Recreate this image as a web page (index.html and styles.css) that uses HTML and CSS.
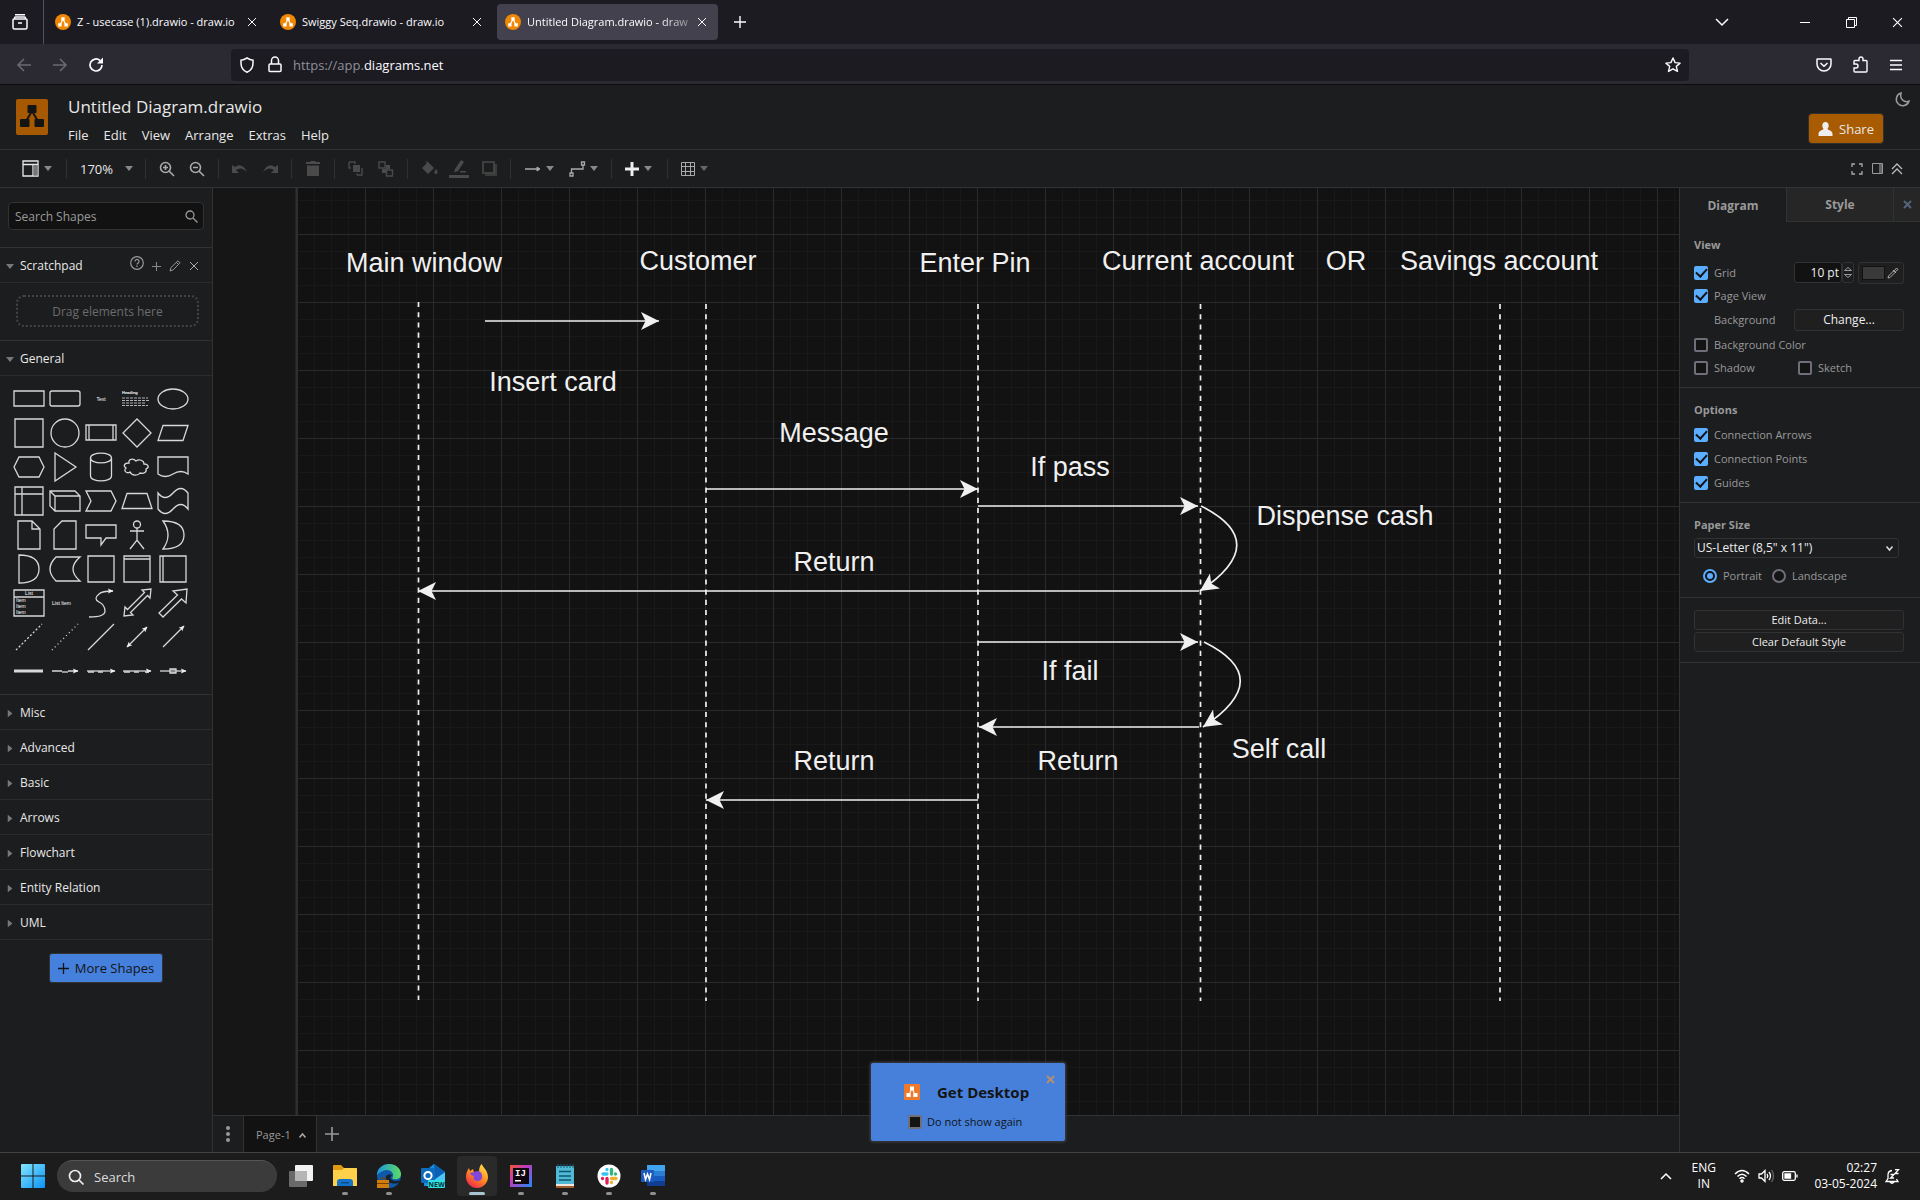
FILE: index.html
```html
<!DOCTYPE html>
<html lang="en">
<head>
<meta charset="utf-8">
<title>Untitled Diagram.drawio - draw.io</title>
<link rel="stylesheet" href="styles.css">
</head>
<body>
<svg class="defs" width="0" height="0" aria-hidden="true">
  <defs>
    <symbol id="drawio" viewBox="0 0 16 16"><circle cx="8" cy="8" r="8" fill="#f08705"/><path d="M8 5 5 11M8 5l3 6" stroke="#fff" stroke-width="1.2"/><path d="M6.3 3.2h3.4v3.2H6.3zM3.2 9.3h3.4v3.2H3.2zM9.4 9.3h3.4v3.2H9.4z" fill="#fff"/></symbol>
    <symbol id="x" viewBox="0 0 10 10"><path d="m1 1 8 8M9 1 1 9" stroke="currentColor" fill="none"/></symbol>
    <symbol id="plus" viewBox="0 0 12 12"><path d="M6 0v12M0 6h12" stroke="currentColor" stroke-width="1.4" fill="none"/></symbol>
    <symbol id="caret" viewBox="0 0 8 5"><path d="M0 0h8L4 5z" fill="currentColor"/></symbol>
    <marker id="head" markerUnits="userSpaceOnUse" markerWidth="20" markerHeight="20" refX="18" refY="9.5" orient="auto"><path d="M18 9.5 0 .5l4.5 9L0 18.500z" fill="#f0f0f0"/></marker>
    <marker id="tip" markerUnits="userSpaceOnUse" markerWidth="6" markerHeight="6" refX="5" refY="3" orient="auto-start-reverse"><path d="M5.500 3 0 .5l1 2.500-1 2.500z" fill="#f0f0f0"/></marker>
  </defs>
</svg>

<header class="tabbar">
  <button class="plain recent" aria-label="Recent browsing"><svg width="16" height="16" viewBox="0 0 16 16" fill="none" stroke="#fbfbfe" stroke-width="1.500"><path d="M3 .8h10M2 5q-1 0-1 1v7.500q0 1.500 1.500 1.500h11q1.500 0 1.500-1.500V6q0-1-1-1zM2.500 5V4q0-1 1-1h9q1 0 1 1v1M6 9h4"/></svg></button>
  <nav class="tabs">
    <a class="tab" href="#"><svg class="fav"><use href="#drawio"/></svg><span>Z - usecase (1).drawio - draw.io</span><svg class="close"><use href="#x"/></svg></a>
    <a class="tab" href="#"><svg class="fav"><use href="#drawio"/></svg><span>Swiggy Seq.drawio - draw.io</span><svg class="close"><use href="#x"/></svg></a>
    <a class="tab active" href="#"><svg class="fav"><use href="#drawio"/></svg><span>Untitled Diagram.drawio - draw</span><svg class="close"><use href="#x"/></svg></a>
  </nav>
  <button class="plain newtab" aria-label="New tab"><svg width="12" height="12"><use href="#plus"/></svg></button>
  <div class="winctl">
    <button class="plain alltabs" aria-label="List all tabs"><svg width="14" height="8" fill="none" stroke="#fbfbfe" stroke-width="1.500"><path d="m1 1 6 6 6-6"/></svg></button>
    <button class="plain" aria-label="Minimise"><svg width="10" height="10" stroke="#fff"><path d="M0 5.500h10"/></svg></button>
    <button class="plain" aria-label="Restore"><svg width="11" height="11" fill="none" stroke="#fff"><path d="M.5 2.500h8v8h-8zM2.500 2.500v-2h8v8h-2"/></svg></button>
    <button class="plain" aria-label="Close"><svg width="11" height="11" viewBox="0 0 10 10" color="#fff"><use href="#x"/></svg></button>
  </div>
</header>

<div class="navbar">
  <div class="navbtns">
    <button class="plain dim" aria-label="Back"><svg width="16" height="14" fill="none" stroke="currentColor" stroke-width="1.500"><path d="M15 7H2M8 1 2 7l6 6"/></svg></button>
    <button class="plain dim" aria-label="Forward"><svg width="16" height="14" fill="none" stroke="currentColor" stroke-width="1.500"><path d="M1 7h13M8 1l6 6-6 6"/></svg></button>
    <button class="plain" aria-label="Reload"><svg width="16" height="16" fill="none" stroke="#fbfbfe" stroke-width="1.700"><path d="M14 8a6 6 0 1 1-2-4.500"/><path d="M15 .5v6H9z" fill="#fbfbfe" stroke="none"/></svg></button>
  </div>
  <div class="urlbox">
    <svg width="16" height="16" fill="none" stroke="#fbfbfe" stroke-width="1.500"><path d="M8 1c2.500 1.600 4 2 6 2.200v3C14 11 12 13.500 8 15.200 4 13.500 2 11 2 6.200v-3C4 3 5.500 2.600 8 1z"/></svg>
    <svg width="14" height="17" fill="none" stroke="#fbfbfe" stroke-width="1.500"><path d="M2 8h10q1 0 1 1v5.500q0 1-1 1H2q-1 0-1-1V9q0-1 1-1zM3.500 8V4.500a3.500 3.500 0 0 1 7 0V8"/></svg>
    <span class="url">https://app.<b>diagrams.net</b></span>
    <svg width="16" height="16" fill="none" stroke="#fbfbfe" stroke-width="1.400" stroke-linejoin="round"><path d="m8 1 2.100 4.600 5 .5-3.800 3.300 1.200 5L8 11.800l-4.500 2.600 1.200-5L.9 6.100l5-.5z"/></svg>
  </div>
  <div class="navright">
    <button class="plain" aria-label="Pocket"><svg width="16" height="14" fill="none" stroke="#fbfbfe" stroke-width="1.500"><path d="M1.500 1h13q.5 0 .5.500V6a7 7 0 0 1-14 0V1.500Q1 1 1.500 1zM4.500 5 8 8.200 11.500 5"/></svg></button>
    <button class="plain" aria-label="Extensions"><svg width="15" height="17" fill="none" stroke="#fbfbfe" stroke-width="1.400"><path d="M2 16h11q1 0 1-1V5.500q0-1-1-1h-3V3a2 2 0 0 0-4 0v1.500H2q-1 0-1 1V8h2a2 2 0 0 1 0 4H1v3q0 1 1 1z"/></svg></button>
    <button class="plain" aria-label="Menu"><svg width="12" height="12" stroke="#fbfbfe" stroke-width="1.300"><path d="M0 1.500h12M0 6h12M0 10.500h12"/></svg></button>
  </div>
</div>

<div class="apphead">
  <svg class="logo" width="32" height="36" viewBox="0 0 32 36"><rect width="32" height="36" rx="2" fill="#a65900"/><path d="M16 12 9 24M16 12l7 12" stroke="#141414" stroke-width="2"/><rect x="11.500" y="6" width="9" height="8" rx="1" fill="#141414"/><rect x="4" y="20" width="9.500" height="8" rx="1" fill="#141414"/><rect x="18.500" y="20" width="9.500" height="8" rx="1" fill="#141414"/></svg>
  <div class="titles">
    <h1>Untitled Diagram.drawio</h1>
    <nav class="menu"><a href="#">File</a><a href="#">Edit</a><a href="#">View</a><a href="#">Arrange</a><a href="#">Extras</a><a href="#">Help</a></nav>
  </div>
  <button class="share"><svg width="15" height="14" fill="#eee"><path d="M7.500 0c2 0 3.200 1.400 3.200 3.400 0 1.500-.6 2.400-1.200 3.400 0 1.500 5 1.700 5 5V14H.5v-2.200c0-3.300 5-3.500 5-5-.6-1-1.200-1.900-1.200-3.400C4.300 1.400 5.500 0 7.500 0z"/></svg>Share</button>
  <button class="plain moon" aria-label="Appearance"><svg width="15" height="15" fill="none" stroke="#9a9a9a" stroke-width="1.500"><path d="M6 1a6.500 6.500 0 1 0 8 8.300C9 11 4.500 7 6 1z"/></svg></button>
</div>

<div class="toolbar">
  <div class="group first"><button class="plain drop on" aria-label="View"><svg width="17" height="17" fill="none" stroke="currentColor" stroke-width="1.300"><path d="M1 1h15v15H1zM1 4.500h15M11 4.500V16"/><path d="M11.500 5h4v10.500h-4z" fill="#777" stroke="none"/></svg><svg class="caret"><use href="#caret"/></svg></button></div>
  <div class="group zoom"><button class="plain drop on"><span>170%</span><svg class="caret"><use href="#caret"/></svg></button></div>
  <div class="group"><button class="plain icon lit" aria-label="Zoom in"><svg width="16" height="16" fill="none" stroke="currentColor" stroke-width="1.600"><circle cx="6.500" cy="6.500" r="5"/><path d="m10 10 5 5M4 6.500h5M6.500 4v5"/></svg></button><button class="plain icon lit" aria-label="Zoom out"><svg width="16" height="16" fill="none" stroke="currentColor" stroke-width="1.600"><circle cx="6.500" cy="6.500" r="5"/><path d="m10 10 5 5M4 6.500h5"/></svg></button></div>
  <div class="group"><button class="plain icon" aria-label="Undo"><svg width="16" height="10"><path d="M0 1v8h7L4 6q5-4 11 2-5-10-12-5z" fill="currentColor"/></svg></button><button class="plain icon" aria-label="Redo"><svg width="16" height="10"><path d="M16 1v8H9l3-3Q7 2 1 8 6-2 13 3z" fill="currentColor"/></svg></button></div>
  <div class="group"><button class="plain icon" aria-label="Delete"><svg width="14" height="16" fill="currentColor"><path d="M0 1h4l1-1h4l1 1h4v2H0zM1 4.500h12V15H1z"/></svg></button></div>
  <div class="group"><button class="plain icon" aria-label="To front"><svg width="16" height="16" fill="currentColor"><path d="M5 4h7v7H5z"/><path d="M1 1h6v2M1 1v6h2M9 14h5V7M9 12.500V14" fill="none" stroke="currentColor" stroke-width="1.400"/></svg></button><button class="plain icon" aria-label="To back"><svg width="16" height="16" fill="none" stroke="currentColor" stroke-width="1.400"><path d="M1 1h6v6H1zM8.500 9h6v6h-6z"/><path d="M8 4h4v4H8zM4 8h4v4H4z" fill="currentColor" stroke="none"/></svg></button></div>
  <div class="group"><button class="plain icon" aria-label="Fill colour"><svg width="17" height="15" fill="currentColor"><path d="m7 1 6 6-6 6-6-6 5-5-2-2zM15 8c3 4 1 5 0 5s-3-1 0-5z"/></svg></button><button class="plain icon" aria-label="Line colour"><svg width="20" height="18" fill="currentColor"><path d="m12 0 3 2-6 9-4 1.500L6 9zM11 11h6v1.500h-6zM0 15h20v3H0z"/></svg></button><button class="plain icon" aria-label="Shadow"><svg width="15" height="15"><path d="M3 3h12v12H3z" fill="#3a3a3a"/><path d="M1 1h11v11H1z" fill="#1c1d1f" stroke="currentColor" stroke-width="1.600"/></svg></button></div>
  <div class="group"><button class="plain drop lit" aria-label="Connection"><svg width="16" height="8" stroke="currentColor" fill="currentColor"><path d="M0 4h12" stroke-width="1.500"/><path d="m12 2 3 2-3 2z"/></svg><svg class="caret"><use href="#caret"/></svg></button><button class="plain drop lit" aria-label="Waypoints"><svg width="16" height="16" fill="none" stroke="currentColor" stroke-width="1.300"><path d="M2.500 12V8H14V4M1 12h3v3H1zM12.500 1h3v3h-3z"/></svg><svg class="caret"><use href="#caret"/></svg></button></div>
  <div class="group single"><button class="plain drop on" aria-label="Insert"><svg width="14" height="14" stroke="#eee" stroke-width="3"><path d="M7 0v14M0 7h14"/></svg><svg class="caret"><use href="#caret"/></svg></button></div>
  <div class="group single"><button class="plain drop lit" aria-label="Table"><svg width="14" height="14" fill="none" stroke="currentColor"><path d="M.5.5h13v13H.5zM.5 4.500h13M.5 9.500h13M4.500.5v13M9.500.5v13"/></svg><svg class="caret dimcaret"><use href="#caret"/></svg></button></div>
  <div class="toolright">
    <button class="plain" aria-label="Fullscreen"><svg width="12" height="12" fill="none" stroke="#aaa" stroke-width="1.300"><path d="M1 4V1h3M8 1h3v3M11 8v3H8M4 11H1V8"/></svg></button>
    <button class="plain" aria-label="Format panel"><svg width="11" height="11" fill="none" stroke="#999"><path d="M.5.500h10v10H.5z"/><path d="M7 1h3v9H7z" fill="#666" stroke="none"/></svg></button>
    <button class="plain" aria-label="Collapse"><svg width="10" height="12" fill="none" stroke="#bbb" stroke-width="1.300"><path d="m0 6 5-5 5 5M0 11l5-5 5 5"/></svg></button>
  </div>
</div>

<main class="work">
  <aside class="shapes">
    <div class="searchwrap"><label class="search"><input type="text" placeholder="Search Shapes" aria-label="Search Shapes"><svg width="13" height="13" fill="none" stroke="#999" stroke-width="1.300"><circle cx="5" cy="5" r="4"/><path d="m8 8 4.500 4.500"/></svg></label></div>
    <div class="cat open"><svg class="tri"><use href="#caret"/></svg>Scratchpad
      <span class="tools">
        <svg class="help" width="14" height="14" fill="none" stroke="#999" stroke-width="1.200"><circle cx="7" cy="7" r="6.300"/><path d="M5 5.500a2 2 0 1 1 3 1.700q-1 .6-1 1.300M7 9.500V11"/></svg>
        <svg width="9" height="9" color="#888"><use href="#plus"/></svg>
        <svg width="12" height="12" fill="none" stroke="#999"><path d="m1 11 1-3.500L9 .8l2 2-6.700 7zM7.500 2.500l2 2"/></svg>
        <svg width="10" height="10" color="#aaa"><use href="#x"/></svg>
      </span>
    </div>
    <div class="scratch"><div class="dropzone">Drag elements here</div></div>
    <div class="cat open"><svg class="tri"><use href="#caret"/></svg>General</div>
    <div class="palette">
      <svg viewBox="-18 -17 36 34"><path d="M-15-8h30V7h-30z"/></svg>
      <svg viewBox="-18 -17 36 34"><rect x="-15" y="-8" width="30" height="15" rx="2"/></svg>
      <svg viewBox="-18 -17 36 34"><text x="0" y="2" text-anchor="middle">Text</text></svg>
      <svg viewBox="-18 -17 36 34"><text class="bold" x="-15" y="-5">Heading</text><path class="fine" d="M-15-1h26M-15 1.500h27M-15 4h23M-15 6.500h26"/></svg>
      <svg viewBox="-18 -17 36 34"><ellipse rx="15" ry="10"/></svg>

      <svg viewBox="-18 -17 36 34"><path d="M-14-14h28v28h-28z"/></svg>
      <svg viewBox="-18 -17 36 34"><circle r="14"/></svg>
      <svg viewBox="-18 -17 36 34"><path d="M-15-8h30V7h-30zM-12-8V7M12-8V7"/></svg>
      <svg viewBox="-18 -17 36 34"><path d="M0-14 14 0 0 14-14 0z"/></svg>
      <svg viewBox="-18 -17 36 34"><path d="M-10-7.500h25l-5 15h-25z"/></svg>

      <svg viewBox="-18 -17 36 34"><path d="M-15 0l5-10h20L15 0l-5 10h-20z"/></svg>
      <svg viewBox="-18 -17 36 34"><path d="M-10-14 11 0-10 14z"/></svg>
      <svg viewBox="-18 -17 36 34"><path d="M-10.500-9v18c0 6.500 21 6.500 21 0V-9c0-6.500-21-6.500-21 0 0 6.500 21 6.500 21 0"/></svg>
      <svg viewBox="-18 -17 36 34"><path d="M-8-4c-5 0-6 3-3 5-3 3 1 6 4 4 2 4 8 4 10 1 4 1 7-1 6-4 4-2 2-5-2-5 0-4-5-5-8-3-3-3-8-2-7 2z"/></svg>
      <svg viewBox="-18 -17 36 34"><path d="M-15-10h30V7q-7-5-15 0t-15 0z"/></svg>

      <svg viewBox="-18 -17 36 34"><path d="M-14-14h28v28h-28zM-14-7h28M-7-14v28"/></svg>
      <svg viewBox="-18 -17 36 34"><path d="M-15-10h25l5 5V10h-25l-5-5zM-15-10l5 5h25M-10-5v15"/></svg>
      <svg viewBox="-18 -17 36 34"><path d="M-15-10h25L15 0l-5 10h-25l5-10z"/></svg>
      <svg viewBox="-18 -17 36 34"><path d="M-10-7.500h20l5 15h-30z"/></svg>
      <svg viewBox="-18 -17 36 34"><path d="M-15-8q7 9 15 0t15 0V8Q8-1 0 8t-15 0z"/></svg>

      <svg viewBox="-18 -17 36 34"><path d="M-11-14H3l8 8v20h-22zM3-14v8h8"/></svg>
      <svg viewBox="-18 -17 36 34"><path d="M-3-14h14v28h-22V-6z"/></svg>
      <svg viewBox="-18 -17 36 34"><path d="M-15-10h30V3H5l-5 7V3h-15z"/></svg>
      <svg viewBox="-18 -17 36 34"><circle cy="-10.500" r="3.500"/><path d="M0-7V5M-7-4H7M-7 14l7-9 7 9"/></svg>
      <svg viewBox="-18 -17 36 34"><path d="M-10-14q21 0 21 14t-21 14Q0 0-10-14z"/></svg>

      <svg viewBox="-18 -17 36 34"><path d="M-10-14q20 0 20 14t-20 14z"/></svg>
      <svg viewBox="-18 -17 36 34"><path d="M-9-12h24q-14 12 0 24H-9q-12-12 0-24z"/></svg>
      <svg viewBox="-18 -17 36 34"><path d="M-13-13h26v26h-26z"/></svg>
      <svg viewBox="-18 -17 36 34"><path d="M-13-13h26v26h-26zM-13-10h26"/></svg>
      <svg viewBox="-18 -17 36 34"><path d="M-13-13h26v26h-26zM-10-13v26"/></svg>

      <svg viewBox="-18 -17 36 34"><path d="M-15-13h30v26h-30zM-15-6h30"/><text x="0" y="-8" text-anchor="middle">List</text><text x="-13" y="-1">Item</text><text x="-13" y="5">Item</text><text x="-13" y="11">Item</text></svg>
      <svg viewBox="-18 -17 36 34"><text x="-13" y="2">List Item</text></svg>
      <svg viewBox="-18 -17 36 34"><path d="M-12 14Q4 14 4 8T-2-1t0-8q3-3 14-3" marker-end="url(#tip)"/></svg>
      <svg viewBox="-18 -17 36 34"><path d="M14-14 13-5l-2.500-2.500-17 17L-4 12l-9 1 1-9 2.500 2.500 17-17L5-13z"/></svg>
      <svg viewBox="-18 -17 36 34"><path d="M14-14 13 0 8.500-4-10 14l-4-4L4.500-8 0-12z"/></svg>

      <svg viewBox="-18 -17 36 34"><path d="m-13 13 26-26" stroke-dasharray="2 2"/></svg>
      <svg viewBox="-18 -17 36 34"><path d="m-13 13 26-26" stroke-dasharray="1 3"/></svg>
      <svg viewBox="-18 -17 36 34"><path d="m-13 13 26-26"/></svg>
      <svg viewBox="-18 -17 36 34"><path d="M-10 10 10-10" marker-start="url(#tip)" marker-end="url(#tip)"/></svg>
      <svg viewBox="-18 -17 36 34"><path d="M-10 10 11-11" marker-end="url(#tip)"/></svg>

      <svg viewBox="-18 -17 36 34"><path class="thick" d="M-15 0h29"/></svg>
      <svg viewBox="-18 -17 36 34"><path d="M-13 0H-3M3 0h10" marker-end="url(#tip)"/><path d="M-3 1h6"/></svg>
      <svg viewBox="-18 -17 36 34"><path d="M-14 0h28" marker-end="url(#tip)"/><path d="M-13 1h6M-3 1h5" /></svg>
      <svg viewBox="-18 -17 36 34"><path d="M-14 0h28" marker-end="url(#tip)"/><path d="M-13 1h6M-3 1h5M8 1h4"/></svg>
      <svg viewBox="-18 -17 36 34"><path d="M-13 0h26" marker-end="url(#tip)"/><path d="M-3-2h6v4h-6z" fill="#888"/></svg>
    </div>
    <div class="cat"><svg class="tri side"><use href="#caret"/></svg>Misc</div>
    <div class="cat"><svg class="tri side"><use href="#caret"/></svg>Advanced</div>
    <div class="cat"><svg class="tri side"><use href="#caret"/></svg>Basic</div>
    <div class="cat"><svg class="tri side"><use href="#caret"/></svg>Arrows</div>
    <div class="cat"><svg class="tri side"><use href="#caret"/></svg>Flowchart</div>
    <div class="cat"><svg class="tri side"><use href="#caret"/></svg>Entity Relation</div>
    <div class="cat"><svg class="tri side"><use href="#caret"/></svg>UML</div>
    <button class="more"><svg width="11" height="11"><use href="#plus"/></svg>More Shapes</button>
  </aside>

  <section class="center">
    <div class="canvas">
      <svg class="diagram" width="100%" height="100%">
        <defs>
          <pattern id="grid" x="84" y="46" width="68" height="68" patternUnits="userSpaceOnUse">
            <path d="M17.500 0v68M34.500 0v68M51.500 0v68M0 17.500h68M0 34.500h68M0 51.500h68" stroke="#191919"/>
            <path d="M.5 0v68M0 .5h68" stroke="#2a2a2a"/>
          </pattern>
        </defs>
        <rect x="83" width="100%" height="100%" fill="#121212"/>
        <rect x="84" width="100%" height="100%" fill="url(#grid)"/>
        <path d="M83.500 0v2000" stroke="#303030" stroke-width="2"/>
        <g transform="translate(-213 -188)">
          <g class="life"><path d="M418.500 302v698"/><path d="M706 304v697"/><path d="M978 304v697"/><path d="M1200.500 304v697"/><path d="M1500 304v697"/></g>
          <g class="msg">
            <path d="M485 321h174"/><path d="M706 489h272"/><path d="M978 506h220"/><path d="M1199 591H418"/>
            <path d="M978 642h220"/><path d="M1199 727H979"/><path d="M978 800H706"/>
            <path d="M1201 506Q1273 542 1200 591"/><path d="M1204 642Q1277 678 1203 727"/>
          </g>
          <g class="labels">
            <text x="424" y="272">Main window</text><text x="698" y="270">Customer</text><text x="975" y="272">Enter Pin</text>
            <text x="1198" y="270">Current account</text><text x="1346" y="270">OR</text><text x="1499" y="270">Savings account</text>
            <text x="553" y="391">Insert card</text><text x="834" y="442">Message</text><text x="1070" y="476">If pass</text>
            <text x="1345" y="525">Dispense cash</text><text x="834" y="571">Return</text><text x="1070" y="680">If fail</text>
            <text x="1078" y="770">Return</text><text x="1279" y="758">Self call</text><text x="834" y="770">Return</text>
          </g>
        </g>
      </svg>
    </div>
    <footer class="pages">
      <button class="plain dots" aria-label="Pages"><svg width="4" height="16" fill="#999"><circle cx="2" cy="2" r="2"/><circle cx="2" cy="8" r="2"/><circle cx="2" cy="14" r="2"/></svg></button>
      <a class="page" href="#">Page-1<svg width="7" height="5" fill="none" stroke="#aaa" stroke-width="1.500"><path d="m.5 4.500 3-3.500 3 3.500"/></svg></a>
      <button class="plain addpage" aria-label="Insert page"><svg width="14" height="14" color="#999"><use href="#plus"/></svg></button>
    </footer>
  </section>

  <aside class="format">
    <div class="ftabs"><button class="cur">Diagram</button><button>Style</button><button class="fx" aria-label="Hide"><svg width="9" height="9" stroke="#52657a" stroke-width="2"><path d="m1 1 7 7M8 1 1 8"/></svg></button></div>
    <section class="view">
      <h2>View</h2>
      <div class="row"><label><input type="checkbox" checked>Grid</label><span class="right"><input class="size" type="text" value="10 pt" aria-label="Grid size"><span class="spin"><svg width="8" height="4"><path d="m.5 3.500 3.500-3 3.500 3z"/></svg><svg width="8" height="4"><path d="m.5.500 3.500 3 3.500-3z"/></svg></span><button class="swatch" aria-label="Grid colour"><i></i><svg width="12" height="12" fill="none" stroke="#aaa"><path d="m1 11 .5-2 5-5 1.500 1.500-5 5zM6 3l3 3M7.500 3.500l2-2.500 1.500 1.500-2.500 2z"/></svg></button></span></div>
      <div class="row"><label><input type="checkbox" checked>Page View</label></div>
      <div class="row bg"><span class="indent">Background</span><button class="btn change">Change...</button></div>
      <div class="row"><label><input type="checkbox">Background Color</label></div>
      <div class="row half"><label><input type="checkbox">Shadow</label><label><input type="checkbox">Sketch</label></div>
    </section>
    <section>
      <h2>Options</h2>
      <div class="row tall"><label><input type="checkbox" checked>Connection Arrows</label></div>
      <div class="row tall"><label><input type="checkbox" checked>Connection Points</label></div>
      <div class="row tall"><label><input type="checkbox" checked>Guides</label></div>
    </section>
    <section class="paper">
      <h2>Paper Size</h2>
      <div class="selwrap"><select aria-label="Paper size"><option>US-Letter (8,5" x 11")</option></select><svg width="7" height="5" fill="none" stroke="#ddd" stroke-width="1.500"><path d="m.5.500 3 3.500 3-3.500"/></svg></div>
      <div class="row radios"><label><input type="radio" name="o" checked>Portrait</label><label><input type="radio" name="o">Landscape</label></div>
    </section>
    <section class="actions"><button class="btn">Edit Data...</button><button class="btn">Clear Default Style</button></section>
  </aside>

  <div class="popup">
    <button class="plain px" aria-label="Close"><svg width="9" height="9" stroke="#b09070" stroke-width="2"><path d="m1 1 7 7M8 1 1 8"/></svg></button>
    <a class="get" href="#"><svg width="16" height="16"><rect width="16" height="16" rx="1" fill="#f07a28"/><path d="M8 4 5 11M8 4l3 7" stroke="#fff"/><path d="M6 2.500h4v4H6zM2.500 9h4.200v4H2.500zM9.300 9h4.200v4H9.300z" fill="#fff"/></svg>Get Desktop</a>
    <label><input type="checkbox">Do not show again</label>
  </div>
</main>

<footer class="taskbar">
  <button class="plain start" aria-label="Start"><svg width="24" height="24"><defs><linearGradient id="win" x2="1" y2="1"><stop stop-color="#82e6ff"/><stop offset="1" stop-color="#0a93f5"/></linearGradient></defs><path d="M0 1q0-1 1-1h10.500v11.500H0zM12.500 0H23q1 0 1 1v10.500H12.500zM0 12.500h11.500V24H1q-1 0-1-1zM12.500 12.500H24V23q0 1-1 1H12.500z" fill="url(#win)"/></svg></button>
  <label class="wsearch"><svg width="16" height="16" fill="none" stroke="#eee" stroke-width="1.700"><circle cx="7" cy="7" r="5.500"/><path d="m11 11 4.500 4.500"/></svg><input type="text" placeholder="Search" aria-label="Search"></label>
  <nav class="apps">
    <button class="plain app" aria-label="Task view"><svg width="24" height="24"><rect x="6" y="1" width="18" height="16" rx="1" fill="#f2f2f2"/><rect y="7" width="18" height="16" rx="1" fill="#777" opacity=".85"/><path d="M6 7h12v10H6z" fill="#b5b5b5"/></svg></button>
    <button class="plain app run" aria-label="File Explorer"><svg width="24" height="24"><path d="M0 2q0-1 1-1h7l3 3h12q1 0 1 1v4H0z" fill="#e09a10"/><path d="M0 6h9l2-2h12q1 0 1 1v17H0z" fill="#ffd04a"/><path d="M4 22v-4q0-3 3-3h10q3 0 3 3v4z" fill="#1273c8"/><path d="M8 18h8v1.500H8z" fill="#0a4c8c"/></svg></button>
    <button class="plain app run" aria-label="Edge"><svg width="24" height="24"><defs><linearGradient id="edge" x2="1"><stop stop-color="#1a93dc"/><stop offset="1" stop-color="#5ddc62"/></linearGradient></defs><circle cx="12" cy="12" r="12" fill="#0f5aa8"/><path d="M0 11C0 4 6 0 12 0c8 0 12 6 12 10 0 5-5 6-8 5-2-1 1-2 0-5-2-5-9-6-16 1z" fill="url(#edge)"/><path d="M9 12c-1 6 5 9 13 7l2-3q-5 2-9 0-3-2 0-5-3-2-6 1z" fill="#16222e"/><path d="M0 16h12v8H0z" fill="#d07c0c"/><path d="M4 16v-2h4v2M0 19.500h12" stroke="#7a3f00" fill="none"/></svg></button>
    <button class="plain app" aria-label="Outlook"><svg width="24" height="24"><path d="M3 8 13 0l11 8v14H3z" fill="#1490df"/><path d="M24 8v14H5z" fill="#4cc6f4"/><path d="m13 0 11 8-10 7z" fill="#0a5fb5"/><rect y="4" width="14" height="15" rx="1" fill="#0f6cbd"/><circle cx="7" cy="11.500" r="3.600" fill="none" stroke="#fff" stroke-width="2"/><rect x="7" y="16" width="17" height="8" rx="1" fill="#2fe0e0"/><text x="15.500" y="22.500" text-anchor="middle">NEW</text></svg></button>
    <button class="plain app run active" aria-label="Firefox"><svg width="24" height="24"><defs><linearGradient id="fox" x1=".8" y1="0" x2=".2" y2="1"><stop stop-color="#ffe04a"/><stop offset=".5" stop-color="#ff8a1e"/><stop offset="1" stop-color="#f02050"/></linearGradient></defs><path d="M1 13c0-4 1-6 3-9l1 3 3-2 1 3 5 0c0-4 1-7 3-8 0 3 6 6 6 13 0 6-5 11-11 11S1 19 1 13z" fill="url(#fox)"/><path d="M9 8q-3 1-4 1 1 3 4 3-2 4 3 5 6 0 5-6-1-4-5-4z" fill="#8148d8"/></svg></button>
    <button class="plain app run" aria-label="IntelliJ IDEA"><svg width="24" height="24"><defs><linearGradient id="ij" x2="1" y2="1"><stop stop-color="#f0592a"/><stop offset=".4" stop-color="#c03ac0"/><stop offset="1" stop-color="#1e8df5"/></linearGradient></defs><path d="M1 1h22v22H1z" fill="url(#ij)"/><path d="M4 4h16v16H4z" fill="#10060e"/><path d="M6 16h6v1.500H6z" fill="#fff"/><text class="mono" x="6" y="12">IJ</text></svg></button>
    <button class="plain app run" aria-label="Notepad"><svg width="24" height="24"><path d="M3 2h18v20H3z" fill="#50b9d6"/><path d="M3 20h18v2H3z" fill="#f2e8df"/><path d="M3 22h18v2H3z" fill="#a05a2c"/><path d="M6 7.500h12M6 12h12M6 16h12" stroke="#0c566e" stroke-width="1.500"/><path d="M5 0v4M8 0v4M11 0v4M14 0v4M17 0v4M20 0v4" stroke="#175f75"/></svg></button>
    <button class="plain app run" aria-label="Slack"><svg width="24" height="24" stroke-width="3.300" stroke-linecap="round"><circle cx="12" cy="12" r="11.500" fill="#fff"/><path d="M6 10h4M10 5.500h0" stroke="#36c5f0"/><path d="M14.500 5.500v4.500M18.500 10h0" stroke="#2eb67d"/><path d="M14.500 14.500H19M14.500 18.500h0" stroke="#ecb22e"/><path d="M10 14.500V19M5.500 14.500h0" stroke="#e01e5a"/></svg></button>
    <button class="plain app run" aria-label="Word"><svg width="24" height="24"><path d="M6 1h18v6H6z" fill="#41a5ee"/><path d="M6 7h18v5H6z" fill="#2b7cd3"/><path d="M6 12h18v5H6z" fill="#185abd"/><path d="M6 17h18v5H6z" fill="#103f91"/><rect y="6" width="13" height="12" rx="1" fill="#1b5cbe"/><path d="m3 9 1.500 6.500L6.500 10l2 5.500L10 9" fill="none" stroke="#fff" stroke-width="1.500"/></svg></button>
  </nav>
  <div class="tray">
    <svg width="12" height="8" fill="none" stroke="#fff" stroke-width="1.500"><path d="m1 7 5-5 5 5"/></svg>
    <span class="lang">ENG<br>IN</span>
    <svg width="16" height="14" fill="none" stroke="#fff" stroke-width="1.500"><path d="M1 5q7-7 14 0M3.500 7.500q4.500-4.500 9 0M5.500 9.800q2.500-2.500 5 0"/><circle cx="8" cy="12" r="1"/></svg>
    <svg width="16" height="14" fill="none" stroke="#fff" stroke-width="1.300"><path d="M1 5h2.500L7 1.500v11L3.500 9H1zM9 5q1.500 2 0 4M11 3q3 4 0 8"/><path d="M13.500 1q4 6 0 12" stroke="#666"/></svg>
    <svg width="16" height="10" fill="none" stroke="#fff" stroke-width="1.300"><rect x=".7" y=".7" width="12.600" height="8.600" rx="1.500"/><path d="M3 3h5.500v4H3z" fill="#fff"/><path d="M15 3.500v3"/></svg>
    <span class="clock">02:27<br>03-05-2024</span>
    <svg width="15" height="15" fill="none" stroke="#fff" stroke-width="1.300"><path d="M7 1.500Q3 2 3 6v3.500L1 12.500h12l-1.500-2.500M5 13q2 2.500 4 0M5.500 5.500H9L5.500 9H9M10 .7h3.500L10 4.500h3.500"/></svg>
  </div>
</footer>
</body>
</html>
```
FILE: styles.css
```css
* { box-sizing: border-box; }
html, body { height: 100%; margin: 0; }
body {
  display: flex; flex-direction: column;
  min-height: 100vh; overflow: hidden;
  background: #1c1d1f; color: #e8e8e8;
  font: 12px/16px "Open Sans", "Noto Sans", sans-serif;
}
svg { flex: none; display: block; overflow: visible; }
.defs { position: absolute; }
a { color: inherit; text-decoration: none; }
button, input, select { font: inherit; color: inherit; }
button { padding: 0; cursor: pointer; }
.plain { display: flex; align-items: center; justify-content: center; background: none; border: 0; }

/* browser tabs */
.tabbar { display: flex; height: 44px; background: #1c1b22; color: #fbfbfe; }
.recent { width: 44px; padding-right: 4px; border-right: 1px solid #53525c; }
.tabs { display: flex; gap: 4px; padding: 4px 0 4px 3px; }
.tab { display: flex; align-items: center; width: 221px; padding: 0 11px 0 8px; border-radius: 4px; font-size: 11px; }
.tab span { flex: 1; margin: 0 5px 0 6px; white-space: nowrap; }
.tab.active { background: #42414d; }
.tab.active span { -webkit-mask-image: linear-gradient(90deg, #000 80%, #0005); mask-image: linear-gradient(90deg, #000 80%, #0005); }
.fav { width: 16px; height: 16px; }
.close { width: 10px; height: 10px; }
.newtab { width: 43px; color: #fbfbfe; }
.winctl { display: flex; margin-left: auto; }
.winctl button { width: 46px; }
.winctl .alltabs { margin-right: 37px; }

/* address bar */
.navbar { display: grid; grid-template-columns: 231px 1fr 231px; align-items: center; height: 41px; padding-top: 1px; background: #2b2a33; border-bottom: 1px solid #0c0c0d; }
.navbtns { display: flex; padding-left: 6px; }
.navbtns button, .navright button { width: 36px; height: 32px; }
.dim { color: #6b6a73; }
.urlbox { display: flex; align-items: center; gap: 13px; height: 32px; padding: 0 8px; border-radius: 4px; background: #1c1b22; }
.url { flex: 1; margin-left: -2px; font-size: 13px; color: #8f8f99; }
.url b { font-weight: 400; color: #fbfbfe; }
.navright { display: flex; justify-content: flex-end; padding-right: 6px; }

/* document title and menus */
.apphead { display: flex; align-items: flex-start; height: 65px; border-bottom: 1px solid #303234; padding-left: 16px; }
.logo { margin-top: 14px; }
.titles { flex: 1; padding: 11px 0 0 20px; }
h1 { margin: 0; font-size: 17px; line-height: 22px; font-weight: 400; }
.menu { display: flex; gap: 15px; margin-top: 9px; font-size: 13px; }
.share { display: flex; align-items: center; justify-content: center; gap: 6px; width: 76px; height: 31px; margin-top: 28px; background: #a85b00; border: 1px solid #303030; border-radius: 4px; font-size: 13px; }
.moon { width: 36px; height: 29px; }

/* toolbar */
.toolbar { display: flex; align-items: center; height: 38px; border-bottom: 1px solid #303234; }
.group { display: flex; align-items: center; height: 20px; padding: 0 6px; border-right: 1px solid #303030; }
.group:nth-last-child(2) { border-right: 0; }
.group.first { padding: 0 7px 0 15px; }
.group.zoom { padding: 0 13px 0 14px; }
.group.single { padding: 0 7px 0 4px; }
.icon { width: 30px; height: 24px; color: #4a4a4a; }
.drop { gap: 5px; width: 44px; height: 24px; }
.zoom .drop { gap: 12px; width: 51px; font-size: 13px; }
.on { color: #e8e8e8; }
.lit { color: #aaa; }
.caret { width: 8px; height: 5px; color: #888; }
.dimcaret { color: #666; }
.toolright { display: flex; gap: 9px; margin-left: auto; padding-right: 18px; }

/* workspace */
.work { position: relative; display: grid; grid-template-columns: 213px 1fr 241px; flex: 1; min-height: 0; border-bottom: 1px solid #404244; }
.shapes { border-right: 1px solid #303234; overflow: hidden; }
.searchwrap { padding: 14px 8px 17px; border-bottom: 1px solid #303234; }
.search { display: flex; align-items: center; height: 28px; padding: 1px 5px 0 6px; background: #121212; border: 1px solid #303234; border-radius: 4px; }
.search input { flex: 1; min-width: 0; padding: 0; background: none; border: 0; }
input::placeholder { color: #9a9a9a; opacity: 1; }
.cat { display: flex; align-items: center; height: 35px; padding: 2px 13px 0 6px; border-bottom: 1px solid #2a2c2e; }
.tri { width: 8px; height: 5px; margin-right: 6px; color: #777; }
.tri.side { transform: rotate(-90deg); }
.tools { display: flex; align-items: center; gap: 8px; margin-left: auto; }
.tools .help { margin-bottom: 6px; }
.scratch { padding: 12px 13px 13px 16px; border-bottom: 1px solid #303234; }
.dropzone { height: 32px; line-height: 30px; border: 2px dotted #444; border-radius: 8px; text-align: center; color: #6c6c6c; }
.palette { display: grid; grid-template-columns: repeat(5, 36px); padding: 6px 10px 6px 11px; border-bottom: 1px solid #303234; }
.palette svg { width: 36px; height: 34px; fill: none; stroke: #d8d8d8; stroke-width: 1.3; }
.palette .fine { stroke-width: .8; stroke-dasharray: 3 1; }
.palette .thick { stroke-width: 3; }
.palette text { font: 5px "Liberation Sans", sans-serif; fill: #fff; stroke: none; }
.palette .bold { font-weight: 700; font-size: 4px; }
.more { display: flex; align-items: center; justify-content: center; gap: 6px; width: 114px; height: 30px; margin: 13px auto; background: #4580dc; border: 1px solid #303234; border-radius: 3px; color: #141414; font-size: 13px; }

.center { display: flex; flex-direction: column; min-width: 0; }
.canvas { flex: 1; min-height: 0; overflow: hidden; background: #161616; }
.life path { stroke: #f0f0f0; stroke-width: 1.7; stroke-dasharray: 5.1 5.1; }
.msg path { fill: none; stroke: #f0f0f0; stroke-width: 1.7; marker-end: url(#head); }
.labels text { font: 27px "Liberation Sans", Arial, sans-serif; fill: #f0f0f0; text-anchor: middle; }
.pages { display: flex; height: 37px; border-top: 1px solid #303234; color: #999; font-size: 11px; }
.dots { width: 30px; }
.page { display: flex; align-items: center; gap: 8px; padding: 2px 10px 0 12px; background: #121212; border: solid #303234; border-width: 0 1px; }
.addpage { width: 30px; }

/* format panel */
.format { border-left: 1px solid #303234; color: #999; font-size: 11px; }
.ftabs { display: grid; grid-template-columns: 106px 107px 1fr; height: 34px; }
.ftabs button { background: #262626; border: solid #303234; border-width: 0 0 1px 1px; color: #999; font-weight: 700; font-size: 12px; }
.ftabs .cur { padding-top: 2px; background: none; border: 0; }
.ftabs .fx { display: flex; align-items: center; justify-content: center; }
.format section { padding: 12px 16px 7px 14px; border-bottom: 1px solid #303234; }
.format .view { padding-top: 13px; padding-bottom: 8px; }
h2 { margin: 0 0 3px; font-size: 11px; line-height: 20px; font-weight: 700; }
.view h2 { margin-bottom: 6px; }
.row { display: flex; align-items: center; justify-content: space-between; height: 23px; }
.row.tall { height: 24px; }
.row.bg { height: 26px; }
.half label { width: 104px; }
.half { justify-content: flex-start; }
label { display: flex; align-items: center; }
input[type=checkbox], input[type=radio] { appearance: none; display: grid; place-items: center; width: 14px; height: 14px; margin: 0 6px 0 0; border: 2px solid #6f6e79; border-radius: 2px; background: #141414; }
input[type=checkbox]:checked { background: #5aadff; border-color: #5aadff; }
input[type=checkbox]:checked::after { content: ""; width: 9px; height: 5px; margin-bottom: 3px; border: solid #141414; border-width: 0 0 2px 2px; transform: rotate(-48deg); }
input[type=radio] { border-radius: 50%; }
input[type=radio]:checked { border-color: #5aadff; }
input[type=radio]:checked::after { content: ""; width: 6px; height: 6px; border-radius: 50%; background: #5aadff; }
.right { display: flex; align-items: center; }
.size { width: 48px; height: 21px; padding: 0 2px; text-align: right; background: #121212; border: 1px solid #303234; border-radius: 3px; color: #eee; font-size: 12px; }
.spin { display: grid; align-content: space-evenly; justify-items: center; width: 12px; height: 21px; border: 1px solid #303234; border-radius: 3px; }
.spin path { fill: none; stroke: #999; }
.swatch { display: flex; align-items: center; justify-content: space-between; width: 46px; height: 22px; margin-left: 4px; padding: 0 4px 0 3px; background: #1f1f1f; border: 1px solid #303234; border-radius: 3px; }
.swatch i { width: 23px; height: 14px; background: #3a3a3a; border: 1px solid #111; }
.btn { display: block; width: 100%; height: 20px; line-height: 16px; background: #1f1f1f; border: 1px solid #303234; border-radius: 3px; color: #eee; }
.btn.change { width: 110px; height: 22px; font-size: 12px; }
.indent { padding-left: 20px; }
.format .paper { padding-bottom: 9px; }
.selwrap { position: relative; margin-right: 5px; }
.selwrap select { display: block; appearance: none; width: 100%; height: 20px; padding: 0 2px; background: #1c1d1f; border: 1px solid #303234; border-radius: 3px; color: #eee; font-size: 12px; }
.selwrap svg { position: absolute; right: 6px; top: 8px; }
.row.radios { justify-content: flex-start; gap: 10px; height: 30px; padding: 6px 0 0 9px; }
.format .actions { display: grid; gap: 2px; padding: 12px 16px 10px 14px; }

/* desktop notice */
.popup { position: absolute; left: calc(50% - 90px); bottom: 10px; width: 196px; height: 80px; padding: 15px 0 0 33px; background: #4780db; border: 1px solid #303234; border-radius: 3px; color: #141414; font-size: 11px; box-shadow: 0 0 3px #444; }
.px { position: absolute; top: 12px; right: 10px; }
.get { display: flex; align-items: center; gap: 17px; height: 28px; font-size: 15px; font-weight: 700; }
.popup label { margin: 8px 0 0 4px; color: #101418; }
.popup input { margin-right: 5px; }

/* taskbar */
.taskbar { display: flex; align-items: center; height: 47px; padding: 0 20px 1px 21px; background: #1c1c1c; color: #fff; font-size: 12px; }
.wsearch { gap: 10px; width: 220px; height: 32px; margin-left: 12px; padding-left: 11px; background: #3b3b3b; border-top: 1px solid #555; border-radius: 16px; }
.wsearch input { width: 150px; padding: 0; background: none; border: 0; font-size: 13px; }
.wsearch input::placeholder { color: #ddd; }
.apps { display: flex; gap: 4px; padding-left: 4px; }
.app { position: relative; width: 40px; height: 40px; border-radius: 4px; }
.app.active { background: #2a2a2a; }
.app.run::after { content: ""; position: absolute; bottom: 1px; left: 17px; width: 6px; height: 3px; border-radius: 2px; background: #8f8f8f; }
.app.active::after { left: 12px; width: 16px; background: #a9c4d0; }
.app text { font: 700 7px "Open Sans", sans-serif; fill: #06333a; }
.app .mono { font: 700 9px "Liberation Mono", monospace; fill: #fff; }
.tray { display: flex; align-items: center; gap: 8px; margin-left: auto; }
.lang { margin: 0 10px 0 12px; text-align: center; }
.clock { width: 71px; text-align: right; }
```
